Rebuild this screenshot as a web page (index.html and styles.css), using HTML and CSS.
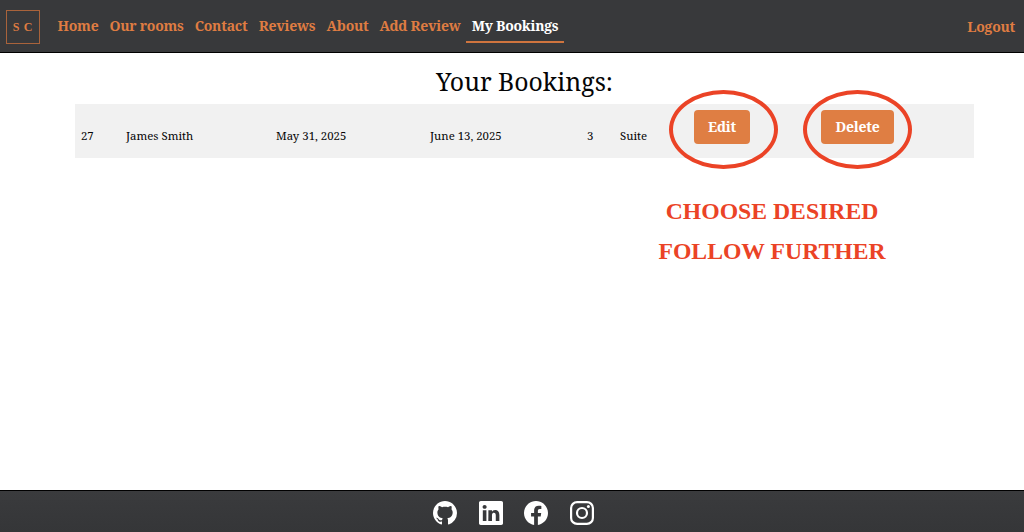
FILE: index.html
```html
<!DOCTYPE html>
<html lang="en">
<head>
<meta charset="utf-8">
<title>Your Bookings</title>
<link rel="stylesheet" href="styles.css">
</head>
<body>
<header class="navbar">
  <a class="brand">S C</a>
  <nav class="nav">
    <a class="home">Home</a><a class="rooms">Our rooms</a><a class="contact">Contact</a><a class="reviews">Reviews</a><a class="about">About</a><a class="add">Add Review</a><a class="bookings active">My Bookings</a>
  </nav>
  <a class="logout">Logout</a>
</header>
<main class="main">
  <h1 class="title">Your Bookings:</h1>
  <div class="row">
    <span class="cell">27</span><span class="cell">James Smith</span><span class="cell">May 31, 2025</span><span class="cell">June 13, 2025</span><span class="cell">3</span><span class="cell">Suite</span>
    <div class="action edit"><button class="btn">Edit</button><i class="ring"></i></div>
    <div class="action delete"><button class="btn">Delete</button><i class="ring"></i></div>
  </div>
  <div class="note"><p>CHOOSE DESIRED</p><p class="second">FOLLOW FURTHER</p></div>
</main>
<footer class="footer">
  <svg class="icon" viewBox="0 0 16 16"><path d="M8 0C3.58 0 0 3.58 0 8c0 3.54 2.29 6.53 5.47 7.59.4.07.55-.17.55-.38 0-.19-.01-.82-.01-1.49-2.01.37-2.53-.49-2.69-.94-.09-.23-.48-.94-.82-1.13-.28-.15-.68-.52-.01-.53.63-.01 1.08.58 1.23.82.72 1.21 1.87.87 2.33.66.07-.52.28-.87.51-1.07-1.78-.2-3.64-.89-3.64-3.95 0-.87.31-1.59.82-2.15-.08-.2-.36-1.02.08-2.12 0 0 .67-.21 2.2.82.64-.18 1.32-.27 2-.27s1.36.09 2 .27c1.53-1.04 2.2-.82 2.2-.82.44 1.1.16 1.92.08 2.12.51.56.82 1.27.82 2.15 0 3.07-1.87 3.75-3.65 3.95.29.25.54.73.54 1.48 0 1.07-.01 1.93-.01 2.2 0 .21.15.46.55.38A8.01 8.01 0 0 0 16 8c0-4.42-3.58-8-8-8z"/></svg>
  <svg class="icon" viewBox="0 0 16 16"><path d="M0 1.146C0 .513.526 0 1.175 0h13.65C15.474 0 16 .513 16 1.146v13.708c0 .633-.526 1.146-1.175 1.146H1.175C.526 16 0 15.487 0 14.854zm4.943 12.248V6.169H2.542v7.225zm-1.2-8.212c.837 0 1.358-.554 1.358-1.248-.015-.709-.52-1.248-1.342-1.248S2.4 3.226 2.4 3.934c0 .694.521 1.248 1.327 1.248zm4.908 8.212V9.359c0-.216.016-.432.08-.586.173-.431.568-.878 1.232-.878.869 0 1.216.662 1.216 1.634v3.865h2.401V9.25c0-2.22-1.184-3.252-2.764-3.252-1.274 0-1.845.7-2.165 1.193v.025h-.016l.016-.025V6.169h-2.4c.03.678 0 7.225 0 7.225z"/></svg>
  <svg class="icon" viewBox="0 0 16 16"><path d="M16 8.049c0-4.446-3.582-8.05-8-8.05C3.58 0-.002 3.603-.002 8.05c0 4.017 2.926 7.347 6.75 7.951v-5.625h-2.03V8.05H6.75V6.275c0-2.017 1.195-3.131 3.022-3.131.876 0 1.791.157 1.791.157v1.98h-1.009c-.993 0-1.303.621-1.303 1.258v1.51h2.218l-.354 2.326H9.25V16c3.824-.604 6.75-3.934 6.75-7.951"/></svg>
  <svg class="icon" viewBox="0 0 24 24"><g class="outline"><rect x="1.1" y="1.1" width="21.8" height="21.8" rx="6"/><circle cx="12" cy="12" r="5"/></g><circle cx="18.4" cy="5.6" r="1.5"/></svg>
</footer>
</body>
</html>
```
FILE: styles.css
```css
* { box-sizing: border-box; }
body { margin: 0; height: 532px; display: flex; flex-direction: column; overflow: hidden; background: #fff; color: #050505; font-family: "Noto Serif", "Droid Serif", "DejaVu Serif", serif; }
.navbar { height: 53px; display: flex; flex: none; background: #38393b; border-bottom: 1px solid #000; color: #df7c42; font-weight: 700; font-size: 14px; letter-spacing: -.25px; }
.brand { width: 34px; height: 34px; margin: 10px 12px 0 6px; border: 1px solid #a9633b; font: 700 12px/33px "Liberation Serif", serif; text-align: center; letter-spacing: .7px; }
.nav { display: flex; }
.nav a { height: 43px; padding-top: 16px; line-height: 20px; text-align: center; white-space: nowrap; }
.home { width: 52px; }
.rooms { width: 85px; }
.contact { width: 64px; }
.reviews { width: 68px; }
.about { width: 53px; }
.add { width: 92px; }
.bookings { width: 98px; }
.nav .active { color: #fff; border-bottom: 2px solid #cf743e; }
.logout { margin: 17px 9px 0 auto; line-height: 20px; }
.main { flex: 1; }
.title { margin: 10px 0 0; padding-left: 25px; height: 41px; text-align: center; font-weight: 400; font-size: 24.8px; line-height: 37px; }
.row { width: 899px; height: 54px; margin-left: 75px; padding-left: 6px; display: grid; grid-template-columns: 45px 150px 154px 157px 33px 74px 127px 1fr; background: #f1f1f1; font-size: 11.4px; white-space: nowrap; }
.cell { padding-top: 24px; line-height: 16px; }
.action { position: relative; padding-top: 6px; }
.btn { display: block; width: 56px; height: 34px; padding: 0 0 1px; border: 0; border-radius: 4px; background: #df7e43; color: #fff; font: inherit; font-size: 14px; font-weight: 700; letter-spacing: -.2px; }
.delete .btn { width: 73px; }
.ring { position: absolute; left: -25px; top: -14px; width: 109px; height: 79px; border: 4px solid #eb4326; border-radius: 50%; }
.delete .ring { left: -18px; }
.note { width: 230px; margin: 33px 0 0 657px; text-align: center; color: #eb4326; font: 700 23.7px/40px "Liberation Serif", serif; white-space: nowrap; }
.note p { margin: 0; }
.footer { height: 42px; flex: none; display: flex; justify-content: center; gap: 21.5px; padding: 10px 0 0 3px; border-top: 1px solid #000; background: linear-gradient(#3a3b3d, #353638); }
.icon { width: 24px; height: 24px; fill: #fff; }
.outline { fill: none; stroke: #fff; stroke-width: 2.2; }
```
